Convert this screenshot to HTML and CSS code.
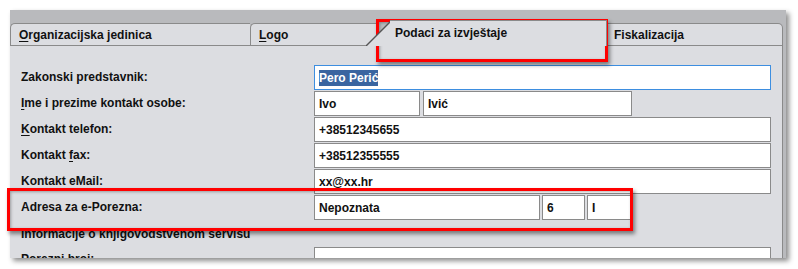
FILE: index.html
```html
<!doctype html>
<html lang="hr">
<head>
  <meta charset="UTF-8">
  <title>Podaci za izvještaje</title>
  <link rel="stylesheet" href="styles.css">
</head>
<body>
  <div class="screen">
    <div class="window">
      <div class="tabs">
        <div class="tab first"><span><u>O</u>rganizacijska jedinica</span></div>
        <div class="tab logo"><span><u>L</u>ogo</span></div>
        <div class="tab selected"><span>Podaci za izvještaje</span></div>
        <div class="tab last"><span>Fiskalizacija</span></div>
      </div>

      <div class="panel">
        <div class="form">
          <div class="label">Zakonski predstavnik:</div>
          <div class="field focused"><span class="selection">Pero Perić</span></div>

          <div class="label"><u>I</u>me i prezime kontakt osobe:</div>
          <div class="group">
            <div class="field w-ime">Ivo</div>
            <div class="field w-prezime">Ivić</div>
          </div>

          <div class="label"><u>K</u>ontakt telefon:</div>
          <div class="field">+38512345655</div>

          <div class="label">Kontakt <u>f</u>ax:</div>
          <div class="field">+38512355555</div>

          <div class="label">Kontakt eMail:</div>
          <div class="field">xx@xx.hr</div>

          <div class="label">Adresa za e-Porezna:</div>
          <div class="group tight">
            <div class="field w-ulica">Nepoznata</div>
            <div class="field w-broj">6</div>
            <div class="field w-dodatak">I</div>
          </div>

          <div class="label section">Informacije o knjigovodstvenom servisu</div>

          <div class="label">Porezni broj:</div>
          <div class="field"></div>
        </div>
      </div>
    </div>

    <div class="mark mark-tab"></div>
    <div class="mark mark-row"></div>
  </div>
</body>
</html>
```

FILE: styles.css
```css
* {
  box-sizing: border-box;
}

body {
  margin: 0;
  background-color: #ffffff;
  font-family: 'Liberation Sans', Arial, sans-serif;
  font-size: 12px;
  font-weight: bold;
  color: #111111;
}

.screen {
  position: relative;
  width: 798px;
  height: 269px;
  overflow: hidden;
}

.window {
  position: relative;
  margin: 10px 0 0 10px;
  width: 776px;
  height: 248px;
  overflow: hidden;
  background-color: #b9babd;
  box-shadow: 3px 3px 5px rgba(0, 0, 0, 0.45);
  display: flex;
  flex-direction: column;
  padding-right: 3px;
}

/* tab strip */
.tabs {
  display: flex;
  align-items: flex-end;
  height: 36px;
  flex-shrink: 0;
}

.tab {
  height: 23px;
  display: flex;
  align-items: center;
  background-color: #dcdde1;
  border-top: 1px solid #8a8a8a;
  border-bottom: 1px solid #8a8a8a;
  white-space: nowrap;
}

.tab.first {
  width: 240px;
  padding-left: 8px;
  border-left: 1px solid #8a8a8a;
  border-top-left-radius: 5px;
}

.tab.logo {
  width: 128px;
  padding-left: 8px;
  border-left: 1px solid #8a8a8a;
  border-top-left-radius: 5px;
}

.tab.selected {
  position: relative;
  z-index: 1;
  width: 241px;
  height: 26px;
  margin-left: -12px;
  padding-left: 29px;
  padding-bottom: 1px;
  background: none;
  border: none;
}

.tab.selected::before {
  content: "";
  position: absolute;
  left: 0;
  top: 1px;
  width: 25px;
  height: 25px;
  background: linear-gradient(to bottom right, transparent calc(50% - 1px), #555555 calc(50% - 0.4px), #555555 calc(50% + 0.4px), #dcdde1 calc(50% + 1px));
}

.tab.selected::after {
  content: "";
  position: absolute;
  left: 24px;
  right: 0;
  top: 0;
  bottom: 0;
  background-color: #dcdde1;
  border-top: 1px solid #8a8a8a;
  border-right: 1px solid #8a8a8a;
}

.tab.selected span {
  position: relative;
  z-index: 1;
}

.tab.last {
  flex: 1;
  padding-left: 7px;
  border-right: 1px solid #8a8a8a;
  border-top-right-radius: 5px;
}

/* content */
.panel {
  flex: 1;
  background-color: #dcdde1;
  border-right: 1px solid #8a8a8a;
  padding: 19px 0 0 11px;
}

.form {
  display: grid;
  grid-template-columns: 293px 457px;
  grid-auto-rows: 25px;
  row-gap: 1px;
}

.label {
  line-height: 25px;
  white-space: nowrap;
}

.label.section {
  grid-column: 1 / -1;
  line-height: 27px;
}

u {
  text-underline-offset: 2px;
}

.field {
  height: 25px;
  display: flex;
  align-items: center;
  padding: 0 4px;
  background-color: #ffffff;
  border: 1px solid #8a8a8a;
  white-space: nowrap;
}

.field.focused {
  border-color: #3d8ee0;
}

.selection {
  background-color: #3a65a0;
  color: #ffffff;
  line-height: 16px;
}

.group {
  display: flex;
  gap: 3px;
}

.group.tight {
  gap: 2px;
}

.w-ime { width: 106px; }
.w-prezime { width: 209px; }
.w-ulica { width: 226px; }
.w-broj { width: 43px; }
.w-dodatak { width: 45px; }

/* red annotation boxes */
.mark {
  position: absolute;
  border: 3px solid #ff0000;
  box-shadow: 2px 3px 4px rgba(0, 0, 0, 0.45), inset 1px 1px 3px rgba(0, 0, 0, 0.3);
}

.mark-tab {
  left: 376px;
  top: 19px;
  width: 232px;
  height: 43px;
}

.mark-row {
  left: 7px;
  top: 188px;
  width: 626px;
  height: 43px;
}
```
